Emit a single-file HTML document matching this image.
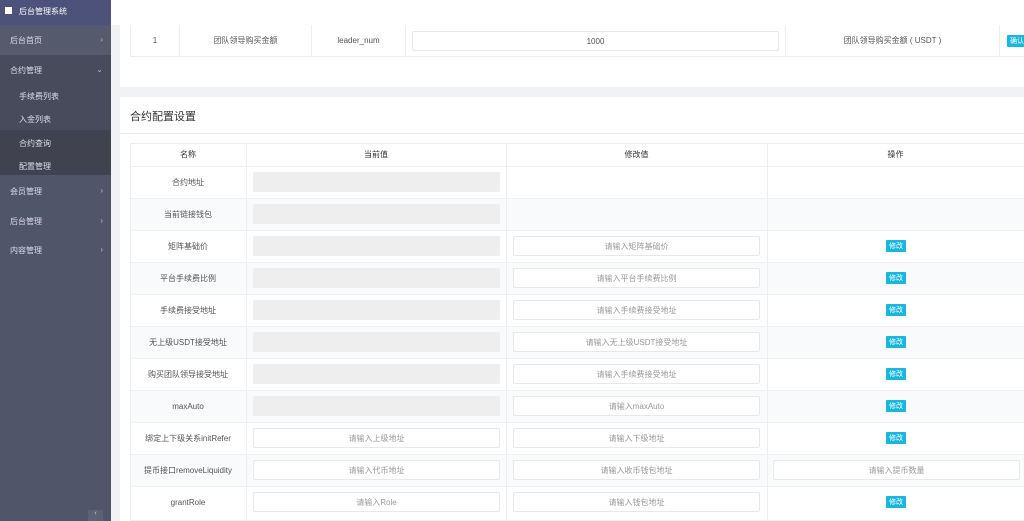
<!DOCTYPE html><html><head><meta charset="utf-8"><style>
*{margin:0;padding:0;box-sizing:border-box}
body{width:1024px;height:521px;overflow:hidden;background:#f0f2f5;font-family:"Liberation Sans","Noto Sans CJK SC",sans-serif;font-size:8px;color:#555;position:relative}
.a{position:absolute}
.sb{left:0;top:0;width:111px;height:521px;background:#50566a}
.mi{position:absolute;left:0;width:111px;color:#dde;font-size:8px;padding-left:10px}
.ar{position:absolute;right:8px;color:#bbc}
.c{display:flex;align-items:center;justify-content:center;text-align:center;z-index:1}
.inp{position:absolute;height:20px;border:1px solid #e6e8ee;border-radius:2px;background:#fff;color:#999;display:flex;align-items:center;justify-content:center;z-index:1}
.gr{background:#eeeeee;border-color:#eee}
.btn{position:absolute;width:20px;height:12px;background:#19b7e0;color:#fff;font-size:7px;display:flex;align-items:center;justify-content:center;border-radius:1px;z-index:1}
.vl{z-index:2}
</style></head><body>
<div class="a sb"></div>
<div class="a" style="left:0;top:0;width:111px;height:25px;background:#4c5279"></div>
<div class="a" style="left:5px;top:7px;width:7px;height:7px;background:#fff"></div>
<div class="a" style="left:19px;top:6px;color:#fff;font-size:8px">后台管理系统</div>
<div class="a" style="left:0;top:25px;width:111px;height:30px;background:#555a6d"></div>
<div class="mi" style="top:35px">后台首页<span class="ar">›</span></div>
<div class="a" style="left:0;top:55px;width:111px;height:120px;background:#474b5b"></div>
<div class="mi" style="top:65px">合约管理<span class="ar">⌄</span></div>
<div class="mi" style="top:91px;padding-left:19px">手续费列表</div>
<div class="mi" style="top:114px;padding-left:19px">入金列表</div>
<div class="a" style="left:0;top:130px;width:111px;height:45px;background:#40434f"></div>
<div class="mi" style="top:138px;padding-left:19px">合约查询</div>
<div class="mi" style="top:161px;padding-left:19px">配置管理</div>
<div class="mi" style="top:186px">会员管理<span class="ar">›</span></div>
<div class="mi" style="top:216px">后台管理<span class="ar">›</span></div>
<div class="mi" style="top:245px">内容管理<span class="ar">›</span></div>
<div class="a" style="left:88px;top:510px;width:15px;height:11px;background:#5c6175;color:#ccd;font-size:7px;text-align:center">‹</div>
<div class="a" style="left:111px;top:0;width:913px;height:25px;background:#fff"></div>
<div class="a" style="left:120px;top:25px;width:904px;height:62px;background:#fff"></div>
<div class="a" style="left:120px;top:97px;width:904px;height:424px;background:#fff"></div>
<div class="a" style="left:120px;top:133px;width:904px;height:1px;background:#e8eaee"></div>
<div class="a" style="left:130px;top:108px;font-size:11px;color:#333">合约配置设置</div>
<!-- top table -->
<div class="a" style="left:130px;top:25px;width:894px;height:32px;border-bottom:1px solid #eceef2"></div>
<div class="a c" style="left:130px;top:25px;width:50px;height:31px;border-right:1px solid #eceef2;border-left:1px solid #eceef2">1</div>
<div class="a c" style="left:180px;top:25px;width:132px;height:31px;border-right:1px solid #eceef2">团队领导购买金额</div>
<div class="a c" style="left:312px;top:25px;width:94px;height:31px;border-right:1px solid #eceef2">leader_num</div>
<div class="a" style="left:406px;top:25px;width:380px;height:31px;border-right:1px solid #eceef2"></div>
<div class="inp" style="left:412px;top:31px;width:367px;color:#555">1000</div>
<div class="a c" style="left:786px;top:25px;width:214px;height:31px;border-right:1px solid #eceef2">团队领导购买金额 ( USDT )</div>
<div class="btn" style="left:1007px;top:35px">确认</div>
<!-- config table -->
<div class="a" style="left:130px;top:143px;width:894px;height:378px;border:1px solid #eceef2;border-right:none"></div>
<div class="a c" style="left:130px;top:143px;width:116px;height:23px;color:#333">名称</div>
<div class="a c" style="left:246px;top:143px;width:260px;height:23px;color:#333">当前值</div>
<div class="a c" style="left:506px;top:143px;width:261px;height:23px;color:#333">修改值</div>
<div class="a c" style="left:767px;top:143px;width:257px;height:23px;color:#333">操作</div>
<div class="a vl" style="left:130px;top:143px;width:1px;height:378px;background:#eceef2"></div>
<div class="a vl" style="left:246px;top:143px;width:1px;height:378px;background:#eceef2"></div>
<div class="a vl" style="left:506px;top:143px;width:1px;height:378px;background:#eceef2"></div>
<div class="a vl" style="left:767px;top:143px;width:1px;height:378px;background:#eceef2"></div>
<div id="rows"></div>
<script>
var R=[["合约地址",1,"",0,""],["当前链接钱包",1,"",0,""],["矩阵基础价",1,"请输入矩阵基础价",1,""],["平台手续费比例",1,"请输入平台手续费比例",1,""],["手续费接受地址",1,"请输入手续费接受地址",1,""],["无上级USDT接受地址",1,"请输入无上级USDT接受地址",1,""],["购买团队领导接受地址",1,"请输入手续费接受地址",1,""],["maxAuto",1,"请输入maxAuto",1,""],["绑定上下级关系initRefer",0,"请输入下级地址",1,"","请输入上级地址"],["提币接口removeLiquidity",0,"请输入收币钱包地址",0,"请输入提币数量","请输入代币地址"],["grantRole",0,"请输入钱包地址",1,"","请输入Role"]];
var h="";R.forEach(function(r,i){var t=166+32*i;
h+='<div class="a" style="left:131px;top:'+t+'px;width:893px;height:32px;border-top:1px solid #eef0f3;'+(i%2?'background:#f9fafb;':'')+'"></div>';
h+='<div class="a c" style="left:130px;top:'+t+'px;width:116px;height:32px">'+r[0]+'</div>';
if(r[1])h+='<div class="inp gr" style="left:253px;top:'+(t+6)+'px;width:247px"></div>';
else h+='<div class="inp" style="left:253px;top:'+(t+6)+'px;width:247px">'+r[5]+'</div>';
if(r[2])h+='<div class="inp" style="left:513px;top:'+(t+6)+'px;width:247px">'+r[2]+'</div>';
if(r[4])h+='<div class="inp" style="left:773px;top:'+(t+6)+'px;width:247px">'+r[4]+'</div>';
if(r[3])h+='<div class="btn" style="left:886px;top:'+(t+10)+'px">修改</div>';});
document.getElementById("rows").innerHTML=h;
</script>
</body></html>
